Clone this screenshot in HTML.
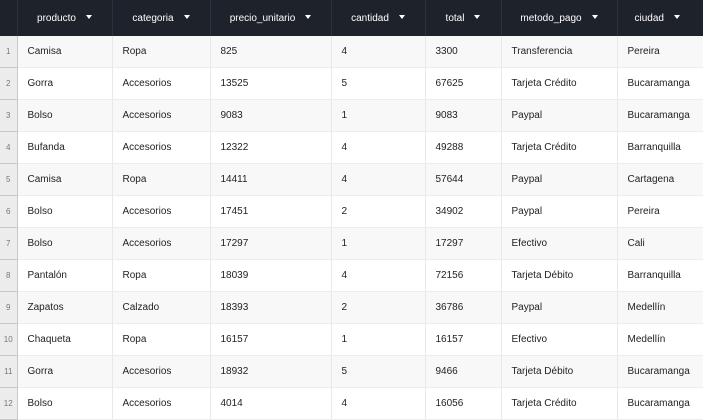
<!DOCTYPE html>
<html><head><meta charset="utf-8"><style>
body{margin:0;width:703px;height:420px;overflow:hidden;background:#fff;font-family:"Liberation Sans",sans-serif;}
table{border-collapse:collapse;table-layout:fixed;width:730px;font-size:10px;color:#222;}
th{background:#1d222b;color:#fff;font-weight:normal;height:36px;padding:0;text-align:center;border-right:1px solid #2c323c;white-space:nowrap}
th .a{display:inline-block;width:0;height:0;border-left:3px solid transparent;border-right:3px solid transparent;border-top:4px solid #fff;margin-left:10px;vertical-align:middle;position:relative;top:-1px}
td{height:31px;padding:0 0 0 10px;border-right:1px solid #e8e8e8;border-bottom:1px solid #ededed;white-space:nowrap;overflow:hidden}
td.n{background:#ececec;color:#777;font-size:8px;padding:0;text-align:center;border-right:1px solid #c8c8c8;border-bottom:1px solid #c8c8c8}
tr:nth-child(even) td:not(.n){background:#f8f8f8}
</style></head><body>
<table>
<colgroup><col style="width:17px"><col style="width:95px"><col style="width:98px"><col style="width:121px"><col style="width:94px"><col style="width:76px"><col style="width:116px"><col style="width:113px"></colgroup>
<tr><th></th><th>producto<span class="a"></span></th><th>categoria<span class="a"></span></th><th>precio_unitario<span class="a"></span></th><th>cantidad<span class="a"></span></th><th>total<span class="a"></span></th><th>metodo_pago<span class="a"></span></th><th style="text-align:left;padding-left:17px">ciudad<span class="a"></span></th></tr>
<tr><td class="n">1</td><td>Camisa</td><td>Ropa</td><td>825</td><td>4</td><td>3300</td><td>Transferencia</td><td>Pereira</td></tr>
<tr><td class="n">2</td><td>Gorra</td><td>Accesorios</td><td>13525</td><td>5</td><td>67625</td><td>Tarjeta Crédito</td><td>Bucaramanga</td></tr>
<tr><td class="n">3</td><td>Bolso</td><td>Accesorios</td><td>9083</td><td>1</td><td>9083</td><td>Paypal</td><td>Bucaramanga</td></tr>
<tr><td class="n">4</td><td>Bufanda</td><td>Accesorios</td><td>12322</td><td>4</td><td>49288</td><td>Tarjeta Crédito</td><td>Barranquilla</td></tr>
<tr><td class="n">5</td><td>Camisa</td><td>Ropa</td><td>14411</td><td>4</td><td>57644</td><td>Paypal</td><td>Cartagena</td></tr>
<tr><td class="n">6</td><td>Bolso</td><td>Accesorios</td><td>17451</td><td>2</td><td>34902</td><td>Paypal</td><td>Pereira</td></tr>
<tr><td class="n">7</td><td>Bolso</td><td>Accesorios</td><td>17297</td><td>1</td><td>17297</td><td>Efectivo</td><td>Cali</td></tr>
<tr><td class="n">8</td><td>Pantalón</td><td>Ropa</td><td>18039</td><td>4</td><td>72156</td><td>Tarjeta Débito</td><td>Barranquilla</td></tr>
<tr><td class="n">9</td><td>Zapatos</td><td>Calzado</td><td>18393</td><td>2</td><td>36786</td><td>Paypal</td><td>Medellín</td></tr>
<tr><td class="n">10</td><td>Chaqueta</td><td>Ropa</td><td>16157</td><td>1</td><td>16157</td><td>Efectivo</td><td>Medellín</td></tr>
<tr><td class="n">11</td><td>Gorra</td><td>Accesorios</td><td>18932</td><td>5</td><td>9466</td><td>Tarjeta Débito</td><td>Bucaramanga</td></tr>
<tr><td class="n">12</td><td>Bolso</td><td>Accesorios</td><td>4014</td><td>4</td><td>16056</td><td>Tarjeta Crédito</td><td>Bucaramanga</td></tr>
</table>
</body></html>
